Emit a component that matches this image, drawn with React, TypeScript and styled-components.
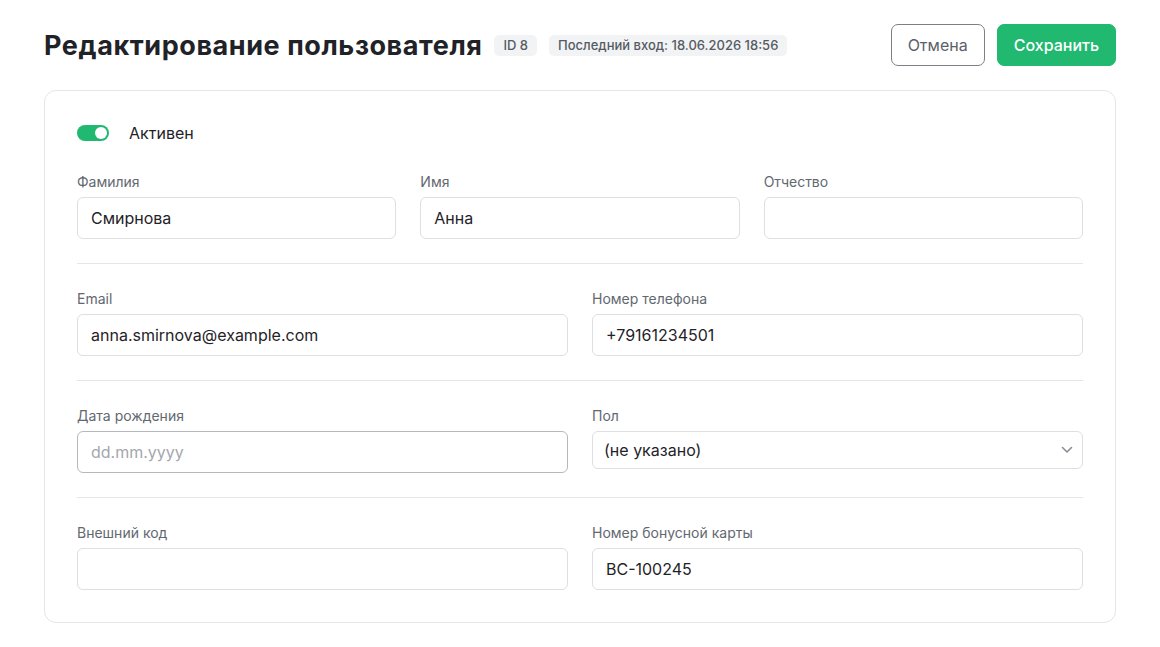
import styled, { createGlobalStyle } from 'styled-components'

const GlobalStyle = createGlobalStyle`
  html, body {
    margin: 0;
    padding: 0;
    background: #ffffff;
  }
  body {
    font-family: Inter, "Noto Sans", "Liberation Sans", sans-serif;
    color: #1f2328;
  }
  * {
    box-sizing: border-box;
  }
`

const Page = styled.div`
  padding: 24px 44px;
  display: flex;
  flex-direction: column;
  gap: 24px;
`

const Header = styled.div`
  display: flex;
  align-items: center;
  justify-content: space-between;
  height: 42px;
`

const TitleGroup = styled.div`
  display: flex;
  align-items: center;
  gap: 12px;
`

const Title = styled.h1`
  margin: 0;
  font-size: 27px;
  font-weight: 700;
  letter-spacing: 0.58px;
  color: #1f2328;
`

const Badge = styled.span`
  display: inline-flex;
  align-items: center;
  height: 21px;
  padding: 0 9px;
  border-radius: 5px;
  background: #f2f3f5;
  color: #555b63;
  font-size: 13px;
  font-weight: 500;
`

const Actions = styled.div`
  display: flex;
  gap: 12px;
`

const Button = styled.button<{ $primary?: boolean }>`
  height: 42px;
  padding: 0 16px;
  border-radius: 7px;
  font-family: inherit;
  font-size: 16px;
  font-weight: ${p => (p.$primary ? 500 : 400)};
  cursor: pointer;
  border: 1px solid ${p => (p.$primary ? '#21b86f' : '#7b7f86')};
  background: ${p => (p.$primary ? '#21b86f' : '#ffffff')};
  color: ${p => (p.$primary ? '#ffffff' : '#5b616a')};
`

const Card = styled.div`
  border: 1px solid #e4e6ea;
  border-radius: 12px;
  padding: 32px;
`

const ToggleRow = styled.label`
  display: flex;
  align-items: center;
  gap: 20px;
  height: 20px;
  margin-bottom: 30px;
  font-size: 16px;
  color: #1f2328;
`

const Switch = styled.span<{ $on: boolean }>`
  position: relative;
  width: 32px;
  height: 16px;
  border-radius: 8px;
  background: ${p => (p.$on ? '#21b86f' : '#d1d5db')};

  &::after {
    content: '';
    position: absolute;
    top: 2px;
    left: ${p => (p.$on ? '18px' : '2px')};
    width: 12px;
    height: 12px;
    border-radius: 50%;
    background: #ffffff;
  }
`

const Section = styled.div<{ $cols: number }>`
  display: grid;
  grid-template-columns: repeat(${p => p.$cols}, 1fr);
  column-gap: 24px;
  padding: 26px 0 24px;
  border-top: 1px solid #e4e6ea;

  &:first-of-type {
    border-top: none;
    padding-top: 0;
  }

  &:last-of-type {
    padding-bottom: 0;
  }
`

const Field = styled.div`
  display: flex;
  flex-direction: column;
  gap: 6px;
`

const Label = styled.span`
  font-size: 14px;
  line-height: 18px;
  color: #626870;
`

const Input = styled.input<{ $strong?: boolean }>`
  height: 42px;
  width: 100%;
  padding: 0 13px;
  border: 1px solid ${p => (p.$strong ? '#b5b8bd' : '#dcdfe3')};
  border-radius: 6px;
  font-family: inherit;
  font-size: 16px;
  color: #1f2328;
  background: #ffffff;
  outline: none;

  &::placeholder {
    color: #a3a7ad;
  }
`

const SelectWrap = styled.div`
  position: relative;
`

const Select = styled.select`
  appearance: none;
  height: 38px;
  width: 100%;
  padding: 0 11px;
  border: 1px solid #dcdfe3;
  border-radius: 6px;
  font-family: inherit;
  font-size: 16px;
  color: #1f2328;
  background: #ffffff;
  outline: none;
`

const Chevron = styled.svg`
  position: absolute;
  right: 9px;
  top: 13px;
  pointer-events: none;
`

export default function App() {
  return (
    <>
      <GlobalStyle />
      <Page>
        <Header>
          <TitleGroup>
            <Title>Редактирование пользователя</Title>
            <Badge>ID 8</Badge>
            <Badge>Последний вход: 18.06.2026 18:56</Badge>
          </TitleGroup>
          <Actions>
            <Button>Отмена</Button>
            <Button $primary>Сохранить</Button>
          </Actions>
        </Header>

        <Card>
          <ToggleRow>
            <Switch $on />
            Активен
          </ToggleRow>

          <Section $cols={3}>
            <Field>
              <Label>Фамилия</Label>
              <Input defaultValue="Смирнова" />
            </Field>
            <Field>
              <Label>Имя</Label>
              <Input defaultValue="Анна" />
            </Field>
            <Field>
              <Label>Отчество</Label>
              <Input />
            </Field>
          </Section>

          <Section $cols={2}>
            <Field>
              <Label>Email</Label>
              <Input defaultValue="anna.smirnova@example.com" />
            </Field>
            <Field>
              <Label>Номер телефона</Label>
              <Input defaultValue="+79161234501" />
            </Field>
          </Section>

          <Section $cols={2}>
            <Field>
              <Label>Дата рождения</Label>
              <Input $strong placeholder="dd.mm.yyyy" />
            </Field>
            <Field>
              <Label>Пол</Label>
              <SelectWrap>
                <Select defaultValue="">
                  <option value="">(не указано)</option>
                  <option value="f">Женский</option>
                  <option value="m">Мужской</option>
                </Select>
                <Chevron width="14" height="12" viewBox="0 0 14 12" fill="none">
                  <path d="M2.5 3.5 L7 8 L11.5 3.5" stroke="#8a8e94" strokeWidth="1.6" strokeLinecap="round" strokeLinejoin="round" />
                </Chevron>
              </SelectWrap>
            </Field>
          </Section>

          <Section $cols={2}>
            <Field>
              <Label>Внешний код</Label>
              <Input />
            </Field>
            <Field>
              <Label>Номер бонусной карты</Label>
              <Input defaultValue="BC-100245" />
            </Field>
          </Section>
        </Card>
      </Page>
    </>
  )
}
